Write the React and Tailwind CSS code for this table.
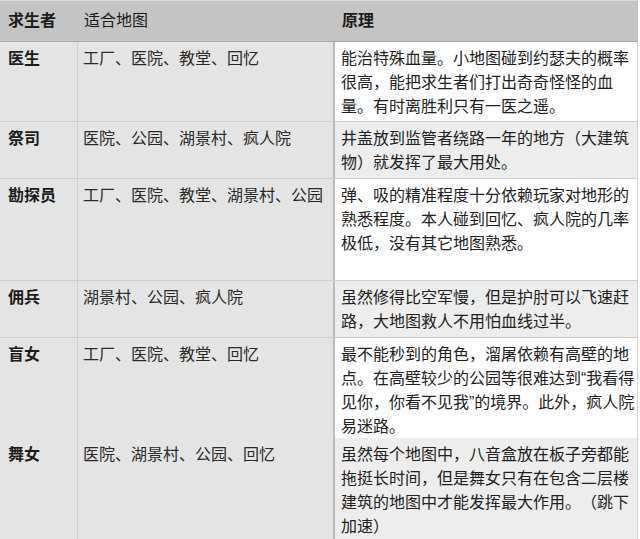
const rows = [
  {
    name: "医生",
    maps: "工厂、医院、教堂、回忆",
    note: "能治特殊血量。小地图碰到约瑟夫的概率很高，能把求生者们打出奇奇怪怪的血量。有时离胜利只有一医之遥。",
    h: "h-[80px]",
    alt: false,
  },
  {
    name: "祭司",
    maps: "医院、公园、湖景村、疯人院",
    note: "井盖放到监管者绕路一年的地方（大建筑物）就发挥了最大用处。",
    h: "h-[57px]",
    alt: true,
  },
  {
    name: "勘探员",
    maps: "工厂、医院、教堂、湖景村、公园",
    note: "弹、吸的精准程度十分依赖玩家对地形的熟悉程度。本人碰到回忆、疯人院的几率极低，没有其它地图熟悉。",
    h: "h-[102px]",
    alt: false,
  },
  {
    name: "佣兵",
    maps: "湖景村、公园、疯人院",
    note: "虽然修得比空军慢，但是护肘可以飞速赶路，大地图救人不用怕血线过半。",
    h: "h-[57px]",
    alt: true,
  },
  {
    name: "盲女",
    maps: "工厂、医院、教堂、回忆",
    note: "最不能秒到的角色，溜屠依赖有高壁的地点。在高壁较少的公园等很难达到“我看得见你，你看不见我”的境界。此外，疯人院易迷路。",
    h: "h-[100px]",
    alt: false,
  },
  {
    name: "舞女",
    maps: "医院、湖景村、公园、回忆",
    note: "虽然每个地图中，八音盒放在板子旁都能拖挺长时间，但是舞女只有在包含二层楼建筑的地图中才能发挥最大作用。（跳下加速）",
    h: "h-[100px]",
    alt: true,
  },
];

export default function App() {
  return (
    <div className="w-[640px] h-[539px] bg-white font-['Liberation_Sans','Noto_Sans_CJK_SC',sans-serif] text-[16px] leading-6 text-[#1c1c1c] [text-spacing-trim:space-all]">
      <div className="w-[638px] border-t border-[#dcdcdc]">
        {/* header */}
        <div className="grid grid-cols-[78px_257px_303px] h-[41px] bg-[#c4c4c4] border-b border-[#a8a8a8] items-center">
          <div className="pl-2 font-bold">求生者</div>
          <div className="pl-[6px]">适合地图</div>
          <div className="pl-[7px] font-bold">原理</div>
        </div>

        {rows.map((r) => (
          <div
            key={r.name}
            className={`grid grid-cols-[78px_257px_303px] ${r.h} border-b border-[#cdcdcd]`}
          >
            <div className="bg-[#e4e4e4] border-r border-[#cfcfcf] pl-2 pt-[5px] font-bold">
              {r.name}
            </div>
            <div className="bg-[#e4e4e4] border-r-2 border-[#b9b9b9] pl-[5px] pt-[5px] text-[#2a2a2a]">
              {r.maps}
            </div>
            <div
              className={`${r.alt ? "bg-[#ededed]" : "bg-white"} border-r border-[#d4d4d4] pl-[6px] pt-[5px] text-[#222]`}
            >
              {r.note}
            </div>
          </div>
        ))}
      </div>
    </div>
  );
}
